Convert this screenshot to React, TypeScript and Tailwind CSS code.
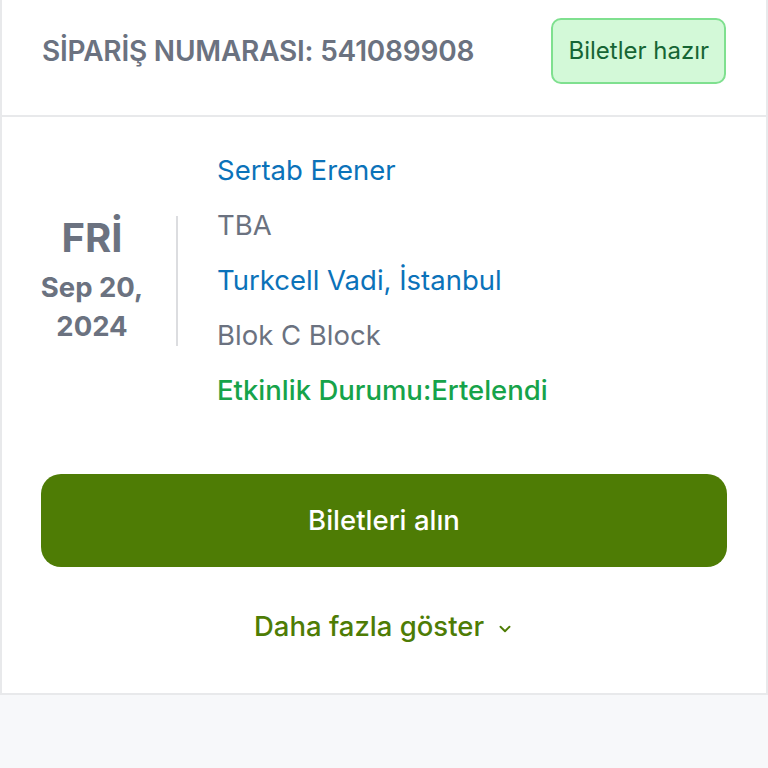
import React from "react";

export default function App() {
  return (
    <div className="min-h-[768px] w-[768px] bg-[#f7f8fa]" style={{ fontFamily: "Inter, 'Noto Sans', sans-serif" }}>
      <div className="bg-white border-l-2 border-r-2 border-b-2 border-[#e8e9eb]">
        <div className="flex items-center justify-between pl-[40px] pr-[40px] h-[117px] border-b-2 border-[#e8e9eb]">
          <div className="text-[28px] font-semibold text-[#6b7280] tracking-[-0.2px] -mt-[14px]">SİPARİŞ NUMARASI: 541089908</div>
          <div className="h-[66px] px-[15px] flex items-center rounded-[10px] bg-[#d3f9d8] border-2 border-[#7fe08f] text-[#166534] text-[24px] -mt-[14px]">
            Biletler hazır
          </div>
        </div>
        <div className="flex pt-[26px]">
          <div className="w-[174px] pl-[6px] flex flex-col items-center justify-center text-[#6b7280] font-bold">
            <div className="text-[40px] leading-[44px]">FRİ</div>
            <div className="text-[27.5px] leading-[39px] mt-[8px] text-center">Sep 20,<br />2024</div>
          </div>
          <div className="flex items-center">
            <div className="w-[2px] h-[130px] bg-[#dcdde0]"></div>
          </div>
          <div className="pl-[39px] flex flex-col text-[27.5px] leading-[55px]">
            <div className="text-[#0b72b9]">Sertab Erener</div>
            <div className="text-[#6b7280]">TBA</div>
            <div className="text-[#0b72b9]">Turkcell Vadi, İstanbul</div>
            <div className="text-[#6b7280]">Blok C Block</div>
            <div className="text-[#16a34a] font-medium">Etkinlik Durumu:Ertelendi</div>
          </div>
        </div>
        <div className="px-[39px] pt-[56px]">
          <div className="h-[93px] rounded-[20px] bg-[#4e7c05] flex items-center justify-center text-white text-[27.5px] font-medium">
            Biletleri alın
          </div>
        </div>
        <div className="flex items-center justify-center gap-[12px] pt-[39px] pb-[46px] text-[#4e7c05] text-[27.5px] leading-[41px] font-medium">
          <span>Daha fazla göster</span>
          <svg width="18" height="18" viewBox="0 0 24 24" fill="none" stroke="currentColor" strokeWidth="2.5" strokeLinecap="round" strokeLinejoin="round" className="mt-[4px]">
            <path d="M6 9l6 6 6-6" />
          </svg>
        </div>
      </div>
    </div>
  );
}
